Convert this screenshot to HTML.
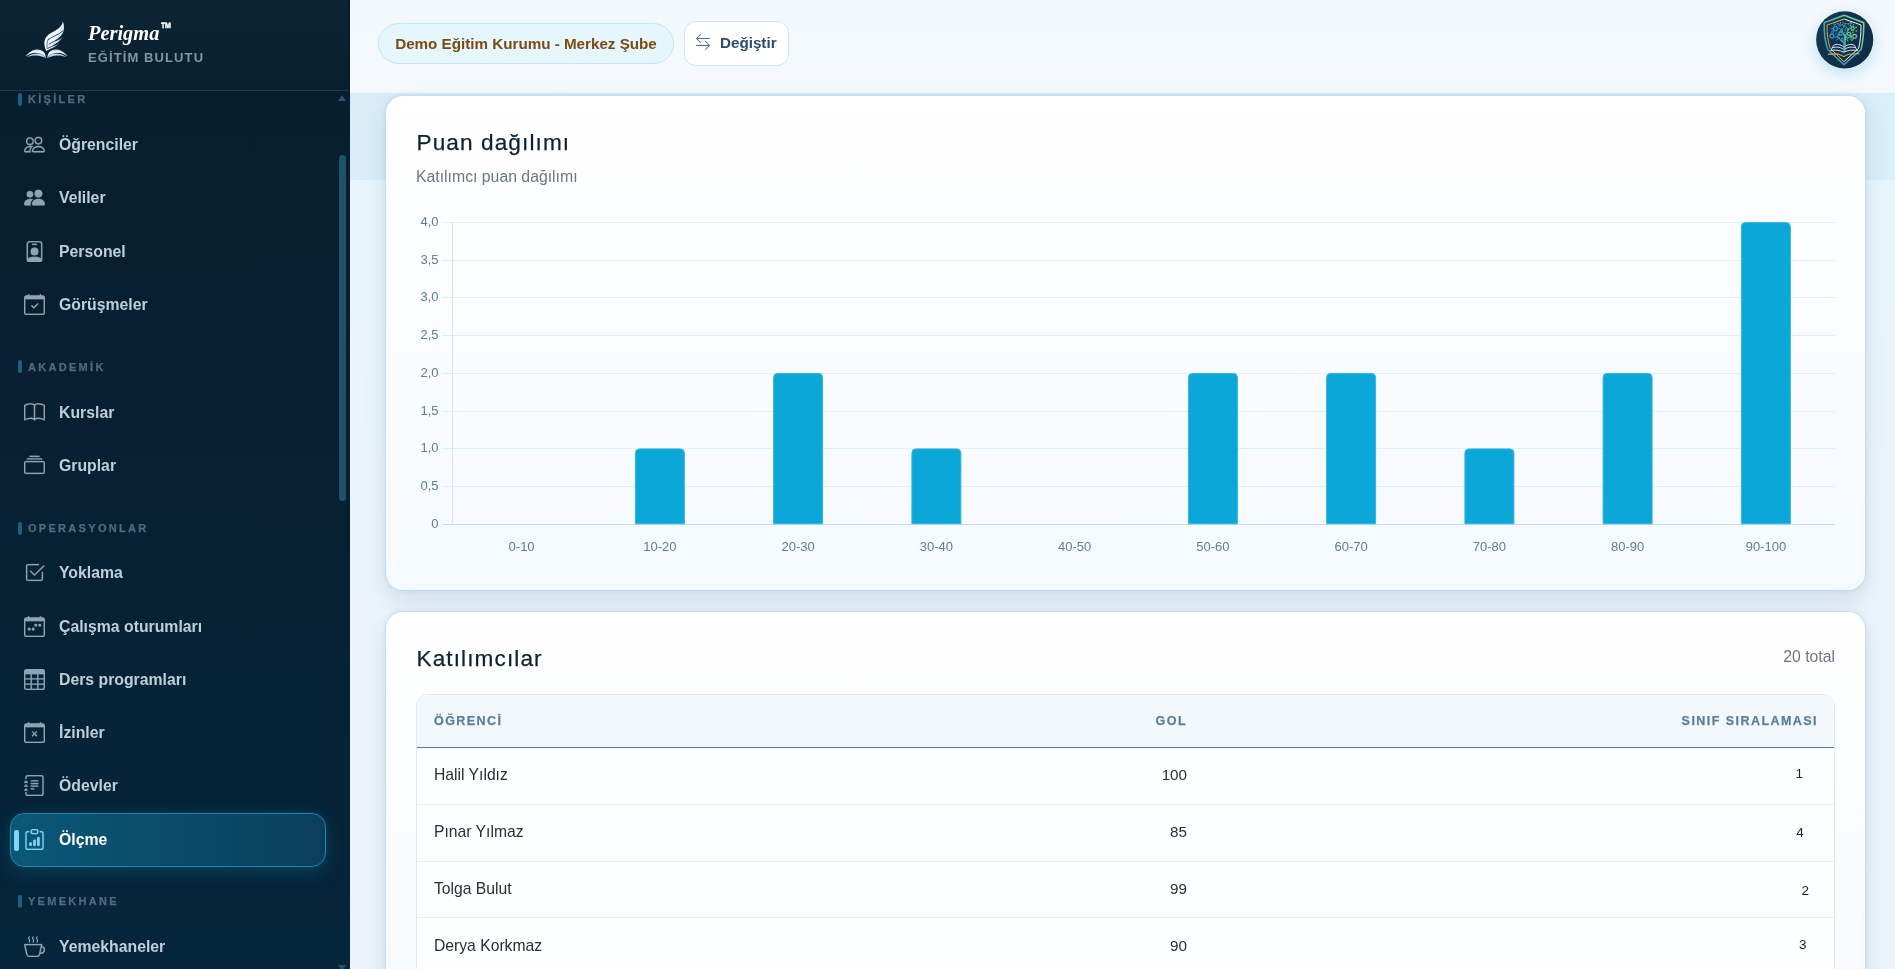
<!DOCTYPE html>
<html lang="tr">
<head>
<meta charset="utf-8">
<title>Perigma Eğitim Bulutu - Ölçme</title>
<style>
*{box-sizing:border-box;margin:0;padding:0}
html,body{width:1895px;height:969px;overflow:hidden}
body{font-family:"Liberation Sans",sans-serif;background:linear-gradient(180deg,#e8f5fc 180px,#ebf4fb 600px);color:#2b2f33;position:relative}
svg{display:block}
/* ---------- sidebar ---------- */
#sidebar{position:absolute;left:0;top:0;width:350px;height:969px;background:linear-gradient(180deg,#071e2e 0px,#071e2e 90px,#071f31 400px,#06263b 969px);overflow:hidden}
#brand{position:absolute;left:0;top:0;width:348px;height:91px;border-bottom:1px solid #1f3a4d;background:linear-gradient(180deg,#0c2534,#081f2f)}
#brand .name{position:absolute;left:88px;top:21.3px;font-family:"Liberation Serif",serif;font-weight:700;font-style:italic;font-size:20.4px;line-height:24px;color:#fff;white-space:nowrap}
#brand .tm{position:absolute;left:160.5px;top:18.7px;font-family:"Liberation Sans",sans-serif;font-weight:700;font-size:11.5px;line-height:12px;color:#fff;transform:scale(1,1.45);transform-origin:50% 0;-webkit-text-stroke:.35px #fff}
#brand .sub{position:absolute;left:88px;top:49px;font-weight:700;font-size:13px;line-height:18px;letter-spacing:1.1px;color:#7e98a9;white-space:nowrap}
#brand svg{position:absolute;left:24px;top:20px}
.sec{position:absolute;left:18.2px;height:14px;padding-left:9.8px;font-weight:700;font-size:11px;line-height:14px;letter-spacing:2.3px;-webkit-text-stroke:.25px #4d6b81;color:#4d6b81;white-space:nowrap}
.sec:before{content:"";position:absolute;left:0;top:0.8px;width:3.8px;height:13px;border-radius:2px;background:#1f5f80}
.nav{position:absolute;left:10px;width:316px;height:52px;border-radius:14px;color:#bfcfda;font-weight:700;font-size:15.8px;line-height:53px;white-space:nowrap}
.nav svg{position:absolute;left:14px;top:16px;width:21px;height:21px;fill:#8ea4b3;stroke:#8ea4b3;stroke-width:.15px}
.nav span{position:absolute;left:49px;top:0}
.nav.active{height:54px;background:linear-gradient(90deg,#0a5878 0%,#0a4a68 55%,#0a3f5c 100%);border:1px solid #2684aa;color:#fff;box-shadow:0 5px 18px rgba(18,120,160,.30),0 0 6px rgba(18,120,160,.18)}
.nav.active:before{content:"";position:absolute;left:3px;top:15.5px;width:4.6px;height:21px;border-radius:2px;background:#7fd6f7}
.nav.active svg{fill:#7fd6f7;stroke:#7fd6f7;left:13px;top:14.6px}
.nav.active span{left:48px;top:-1px}
#sbthumb{position:absolute;left:339px;top:155px;width:7px;height:346px;border-radius:3.5px;background:#1f5269}
.arr{position:absolute;left:338.3px;width:0;height:0;border-left:4.5px solid transparent;border-right:4.5px solid transparent}
/* ---------- top bar ---------- */
#topbar{position:absolute;left:350px;top:0;width:1545px;height:93px;background:linear-gradient(180deg,#f3f8fd,#f5f9fd)}
#pill{position:absolute;left:28px;top:23px;width:296px;height:41px;border-radius:21px;background:#e6f6fd;border:1px solid #c3e7f8;color:#7a4b12;font-weight:700;font-size:15.2px;line-height:39px;text-align:center;white-space:nowrap}
#swap{position:absolute;left:334px;top:21px;width:105px;height:45px;border-radius:12px;background:#fff;border:1px solid #cfe3f0}
#swap svg{position:absolute;left:9.5px;top:12px;width:16px;height:16px;fill:#4d6b81}
#swap span{position:absolute;left:35px;top:0;line-height:42px;font-weight:700;font-size:15.2px;color:#2c4d69}
#avatar{position:absolute;left:1466px;top:11px;width:58px;height:58px;border-radius:50%;box-shadow:0 4px 14px rgba(120,195,235,.45)}
/* ---------- content ---------- */
#band{position:absolute;left:350px;top:93px;width:1545px;height:87px;background:linear-gradient(90deg,#d9edf7,#d6ebf6 50%,#d9eff9)}
.card{position:absolute;left:386px;width:1479px;border-radius:17px;background:linear-gradient(180deg,#ffffff,#f5fafe);box-shadow:0 0 0 1px rgba(185,215,235,.5),0 0 6px rgba(110,160,195,.18),0 10px 24px rgba(95,135,165,.2)}
.h2{position:absolute;left:30.5px;font-size:22.6px;line-height:30px;color:#0c2233;white-space:nowrap;letter-spacing:1.1px;-webkit-text-stroke:.25px #0c2233}
.muted{position:absolute;color:#6b7785;font-size:15.8px;line-height:20px;white-space:nowrap}
#tbl{position:absolute;left:30px;top:82px;width:1419px;height:400px;border:1px solid #dbe9f3;border-radius:12px 12px 0 0;overflow:hidden;background:#fdfeff}
.thead{position:absolute;left:0;top:0;width:100%;height:53px;background:#f3f8fc;border-bottom:1.5px solid #5b7990;font-weight:700;font-size:12.5px;letter-spacing:1.45px;color:#5b7f99;line-height:52px;-webkit-text-stroke:.25px #5b7f99}
.tr{position:absolute;left:0;width:100%;height:57px;border-bottom:1px solid #e3eef6;font-size:15.7px;line-height:54px;color:#2b2f33}
#tbl span{position:absolute;white-space:nowrap}
#tbl .c1{left:17px}
#tbl .c2{right:647px}
#tbl .tr .c2{font-size:15.2px}
#tbl .c3{right:16px}
#tbl .rk{font-size:13.5px;line-height:20px;color:#1d2327}
#sidebar,#topbar,.card{will-change:transform}
</style>
</head>
<body>
<div id="band"></div>
<div id="topbar">
  <div id="pill">Demo Eğitim Kurumu - Merkez Şube</div>
  <div id="swap"><svg viewBox="0 0 16 16"><path fill-rule="evenodd" d="M1 11.5a.5.5 0 0 0 .5.5h11.793l-3.147 3.146a.5.5 0 0 0 .708.708l4-4a.5.5 0 0 0 0-.708l-4-4a.5.5 0 0 0-.708.708L13.293 11H1.500a.5.5 0 0 0-.5.5m14-7a.5.5 0 0 1-.5.5H2.707l3.147 3.146a.5.5 0 1 1-.708.708l-4-4a.5.5 0 0 1 0-.708l4-4a.5.5 0 1 1 .708.708L2.707 4H14.500a.5.5 0 0 1 .5.5"/></svg><span>Değiştir</span></div>
  <div id="avatar"><svg width="58" height="58" viewBox="0 0 58 58"><defs><linearGradient id="avb" x1="0" y1="0" x2="1" y2="1"><stop offset="0" stop-color="#143a54"/><stop offset="1" stop-color="#0c2a45"/></linearGradient><linearGradient id="avs" x1="0" y1="1" x2="1" y2="0"><stop offset="0" stop-color="#3a7fc4"/><stop offset=".5" stop-color="#4fb5ad"/><stop offset="1" stop-color="#93d98a"/></linearGradient><linearGradient id="avg" x1="0" y1="0" x2="1" y2="0"><stop offset="0" stop-color="#e0a326"/><stop offset=".5" stop-color="#f1c65a"/><stop offset=".56" stop-color="#ffffff"/><stop offset="1" stop-color="#f3efe6"/></linearGradient><linearGradient id="avt" x1="0" y1="0" x2="1" y2="0"><stop offset="0" stop-color="#3d8fd6"/><stop offset=".5" stop-color="#3fb0a8"/><stop offset="1" stop-color="#86d67f"/></linearGradient></defs>
<circle cx="28.700" cy="28.800" r="28.600" fill="url(#avb)"/>
<path d="M28.200 4.200L47.800 11.800C47.800 22 47 31 45 38.500L27.900 53.600L11.800 38.500C9 31 8 22 8.200 11.800Z" fill="none" stroke="url(#avs)" stroke-width="1.500" stroke-linejoin="round"/>
<path d="M28.200 8L45 14C45 23 44.300 31 42.600 37.400L27.900 50.700L14.300 37.400C11.800 31 10.900 23 11.100 14Z" fill="none" stroke="url(#avg)" stroke-width="1" stroke-linejoin="round"/>
<g fill="none" stroke="url(#avt)" stroke-width="1" stroke-linecap="round"><path d="M27.700 40.500C27.500 35 28 30 28.800 23.500" stroke="#3f93d2" stroke-width="1.200"/><path d="M28.900 40.500C28.700 35 29.200 30 29.800 23.500" stroke="#5cc79a" stroke-width="1.200"/><path d="M28.400 33C26 30 23.500 27.500 21 26"/><path d="M28.700 30C31 27.500 33.500 25.500 36 24.500"/><path d="M29 26C27.500 23 26.500 20.500 25.500 18"/><path d="M29.200 25C30.500 22 31.500 19.500 33 17"/></g>
<g><circle cx="19.3" cy="17.8" r="2.0" fill="none" stroke="#429fcc" stroke-width="1.1"/>
<line x1="21.60" y1="17.80" x2="22.40" y2="17.80" stroke="#429fcc" stroke-width=".8"/>
<line x1="20.45" y1="19.79" x2="20.85" y2="20.48" stroke="#429fcc" stroke-width=".8"/>
<line x1="18.15" y1="19.79" x2="17.75" y2="20.48" stroke="#429fcc" stroke-width=".8"/>
<line x1="17.00" y1="17.80" x2="16.20" y2="17.80" stroke="#429fcc" stroke-width=".8"/>
<line x1="18.15" y1="15.81" x2="17.75" y2="15.12" stroke="#429fcc" stroke-width=".8"/>
<line x1="20.45" y1="15.81" x2="20.85" y2="15.12" stroke="#429fcc" stroke-width=".8"/>
<circle cx="15.8" cy="25" r="1.9" fill="none" stroke="#3f94d3" stroke-width="1.1"/>
<line x1="18.00" y1="25.00" x2="18.80" y2="25.00" stroke="#3f94d3" stroke-width=".8"/>
<line x1="16.90" y1="26.91" x2="17.30" y2="27.60" stroke="#3f94d3" stroke-width=".8"/>
<line x1="14.70" y1="26.91" x2="14.30" y2="27.60" stroke="#3f94d3" stroke-width=".8"/>
<line x1="13.60" y1="25.00" x2="12.80" y2="25.00" stroke="#3f94d3" stroke-width=".8"/>
<line x1="14.70" y1="23.09" x2="14.30" y2="22.40" stroke="#3f94d3" stroke-width=".8"/>
<line x1="16.90" y1="23.09" x2="17.30" y2="22.40" stroke="#3f94d3" stroke-width=".8"/>
<circle cx="38.6" cy="25.3" r="1.9" fill="none" stroke="#79d289" stroke-width="1.1"/>
<line x1="40.80" y1="25.30" x2="41.60" y2="25.30" stroke="#79d289" stroke-width=".8"/>
<line x1="39.70" y1="27.21" x2="40.10" y2="27.90" stroke="#79d289" stroke-width=".8"/>
<line x1="37.50" y1="27.21" x2="37.10" y2="27.90" stroke="#79d289" stroke-width=".8"/>
<line x1="36.40" y1="25.30" x2="35.60" y2="25.30" stroke="#79d289" stroke-width=".8"/>
<line x1="37.50" y1="23.39" x2="37.10" y2="22.70" stroke="#79d289" stroke-width=".8"/>
<line x1="39.70" y1="23.39" x2="40.10" y2="22.70" stroke="#79d289" stroke-width=".8"/>
<circle cx="36.5" cy="17.5" r="1.6" fill="none" stroke="#70cf8f" stroke-width="1.1"/>
<line x1="38.40" y1="17.50" x2="39.20" y2="17.50" stroke="#70cf8f" stroke-width=".8"/>
<line x1="37.45" y1="19.15" x2="37.85" y2="19.84" stroke="#70cf8f" stroke-width=".8"/>
<line x1="35.55" y1="19.15" x2="35.15" y2="19.84" stroke="#70cf8f" stroke-width=".8"/>
<line x1="34.60" y1="17.50" x2="33.80" y2="17.50" stroke="#70cf8f" stroke-width=".8"/>
<line x1="35.55" y1="15.85" x2="35.15" y2="15.16" stroke="#70cf8f" stroke-width=".8"/>
<line x1="37.45" y1="15.85" x2="37.85" y2="15.16" stroke="#70cf8f" stroke-width=".8"/>
<circle cx="24.5" cy="22.5" r="1.6" fill="none" stroke="#48aec2" stroke-width="1.1"/>
<line x1="26.40" y1="22.50" x2="27.20" y2="22.50" stroke="#48aec2" stroke-width=".8"/>
<line x1="25.45" y1="24.15" x2="25.85" y2="24.84" stroke="#48aec2" stroke-width=".8"/>
<line x1="23.55" y1="24.15" x2="23.15" y2="24.84" stroke="#48aec2" stroke-width=".8"/>
<line x1="22.60" y1="22.50" x2="21.80" y2="22.50" stroke="#48aec2" stroke-width=".8"/>
<line x1="23.55" y1="20.85" x2="23.15" y2="20.16" stroke="#48aec2" stroke-width=".8"/>
<line x1="25.45" y1="20.85" x2="25.85" y2="20.16" stroke="#48aec2" stroke-width=".8"/>
<circle cx="33" cy="22.8" r="1.6" fill="none" stroke="#63cb9a" stroke-width="1.1"/>
<line x1="34.90" y1="22.80" x2="35.70" y2="22.80" stroke="#63cb9a" stroke-width=".8"/>
<line x1="33.95" y1="24.45" x2="34.35" y2="25.14" stroke="#63cb9a" stroke-width=".8"/>
<line x1="32.05" y1="24.45" x2="31.65" y2="25.14" stroke="#63cb9a" stroke-width=".8"/>
<line x1="31.10" y1="22.80" x2="30.30" y2="22.80" stroke="#63cb9a" stroke-width=".8"/>
<line x1="32.05" y1="21.15" x2="31.65" y2="20.46" stroke="#63cb9a" stroke-width=".8"/>
<line x1="33.95" y1="21.15" x2="34.35" y2="20.46" stroke="#63cb9a" stroke-width=".8"/>
<circle cx="23.6" cy="14.4" r=".95" fill="none" stroke="#47abc4" stroke-width=".8"/>
<rect x="31.4" y="12.3" width="1.700" height="1.200" fill="#60ca9c"/>
<line x1="29.7" y1="17.4" x2="28.8" y2="19.5" stroke="#54c0ab" stroke-width=".9"/>
<circle cx="16.5" cy="21.1" r=".95" fill="none" stroke="#4096d1" stroke-width=".8"/>
<rect x="25.4" y="26.6" width="1.700" height="1.200" fill="#4ab3bf"/>
<line x1="31.3" y1="28.5" x2="32.0" y2="30.6" stroke="#5dc99e" stroke-width=".9"/>
<circle cx="18.8" cy="13.7" r=".95" fill="none" stroke="#429dcd" stroke-width=".8"/>
<rect x="22.4" y="26.4" width="1.700" height="1.200" fill="#46aac5"/>
<line x1="20.6" y1="21.8" x2="19.0" y2="23.3" stroke="#43a0cb" stroke-width=".9"/>
<circle cx="31.9" cy="18.6" r=".95" fill="none" stroke="#5ec99d" stroke-width=".8"/>
<rect x="28.7" y="12.1" width="1.700" height="1.200" fill="#55c2a9"/>
<line x1="27.7" y1="16.4" x2="26.3" y2="18.0" stroke="#4cb6bb" stroke-width=".9"/>
<circle cx="28.9" cy="28.1" r=".95" fill="none" stroke="#53bfad" stroke-width=".8"/>
<rect x="26.8" y="23.5" width="1.700" height="1.200" fill="#4eb9b7"/>
<line x1="30.2" y1="15.5" x2="31.1" y2="17.5" stroke="#59c7a1" stroke-width=".9"/>
<circle cx="25.4" cy="19.1" r=".95" fill="none" stroke="#49b0c0" stroke-width=".8"/>
<rect x="18.6" y="25.6" width="1.700" height="1.200" fill="#439fcc"/>
<line x1="24.7" y1="11.0" x2="24.1" y2="13.1" stroke="#48aec2" stroke-width=".9"/>
<circle cx="21.9" cy="24.7" r=".95" fill="none" stroke="#45a6c7" stroke-width=".8"/>
<rect x="39.5" y="19.4" width="1.700" height="1.200" fill="#80d484"/>
<line x1="31.3" y1="26.2" x2="33.3" y2="27.2" stroke="#60ca9c" stroke-width=".9"/>
<circle cx="25.6" cy="29.5" r=".95" fill="none" stroke="#49b1c0" stroke-width=".8"/>
<rect x="33.4" y="14.1" width="1.700" height="1.200" fill="#67cc96"/>
<line x1="28.7" y1="20.6" x2="27.9" y2="22.6" stroke="#50bcb2" stroke-width=".9"/>
<circle cx="29.9" cy="25.9" r=".95" fill="none" stroke="#57c4a7" stroke-width=".8"/>
<rect x="39.2" y="15.8" width="1.700" height="1.200" fill="#7ed385"/>
<line x1="37.8" y1="13.1" x2="36.8" y2="15.1" stroke="#73d08d" stroke-width=".9"/>
<circle cx="35.8" cy="28.5" r=".95" fill="none" stroke="#6ece91" stroke-width=".8"/>
<rect x="14.7" y="17.2" width="1.700" height="1.200" fill="#3f93d3"/>
<line x1="22.5" y1="16.6" x2="24.1" y2="18.0" stroke="#47aac4" stroke-width=".9"/>
<circle cx="28.3" cy="14.9" r=".95" fill="none" stroke="#50bcb2" stroke-width=".8"/>
<rect x="35.9" y="20.6" width="1.700" height="1.200" fill="#71cf8f"/>
<line x1="21.7" y1="27.6" x2="20.6" y2="29.5" stroke="#44a4c8" stroke-width=".9"/>
<circle cx="34.8" cy="12.1" r=".95" fill="none" stroke="#6acd94" stroke-width=".8"/>
<rect x="20.8" y="12.1" width="1.700" height="1.200" fill="#45a5c8"/>
<line x1="26.3" y1="11.3" x2="28.3" y2="12.2" stroke="#4db7b9" stroke-width=".9"/>
<circle cx="34.8" cy="25.8" r=".95" fill="none" stroke="#6acd94" stroke-width=".8"/>
<rect x="25.2" y="13.2" width="1.700" height="1.200" fill="#49b2bf"/></g>
<g fill="none" stroke="#f4f6f8" stroke-width=".9" stroke-linecap="round" stroke-linejoin="round"><path d="M15.500 38.400L17.600 34.300C20.500 32.700 24.500 33.200 27.300 35.700"/><path d="M40.500 38.400L38.400 34.300C35.500 32.700 31.500 33.200 28.800 35.700"/><path d="M14.800 39.500C19 38.600 23.500 39 27.800 41.300C32 39 36.800 38.600 41.300 39.500"/><path d="M17.500 36.500C20.500 35.500 24 36 27 38"/><path d="M38.500 36.500C35.500 35.500 32 36 29 38"/></g>
<path d="M12.500 43.100L22 43C24 43.200 26 44.500 27.800 45.600C29.600 44.500 31.600 43.200 33.600 43L43.100 42.700" fill="none" stroke="#eab23a" stroke-width="1.100" stroke-linecap="round" stroke-linejoin="round"/>
</svg>
</div>
</div>
<div class="card" id="c1" style="top:96px;height:494px">
  <svg id="chart" width="1479" height="494" viewBox="0 0 1479 494" style="position:absolute;left:0;top:0" font-family="Liberation Sans, sans-serif" font-size="13" fill="#5f7d94"><line x1="56" y1="126.5" x2="1449" y2="126.5" stroke="#e3eff7" stroke-width="1"/>
<text x="52.5" y="129.8" text-anchor="end">4,0</text>
<line x1="56" y1="164.5" x2="1449" y2="164.5" stroke="#e3eff7" stroke-width="1"/>
<text x="52.5" y="167.8" text-anchor="end">3,5</text>
<line x1="56" y1="201.5" x2="1449" y2="201.5" stroke="#e3eff7" stroke-width="1"/>
<text x="52.5" y="204.8" text-anchor="end">3,0</text>
<line x1="56" y1="239.5" x2="1449" y2="239.5" stroke="#e3eff7" stroke-width="1"/>
<text x="52.5" y="242.8" text-anchor="end">2,5</text>
<line x1="56" y1="277.5" x2="1449" y2="277.5" stroke="#e3eff7" stroke-width="1"/>
<text x="52.5" y="280.8" text-anchor="end">2,0</text>
<line x1="56" y1="315.5" x2="1449" y2="315.5" stroke="#e3eff7" stroke-width="1"/>
<text x="52.5" y="318.8" text-anchor="end">1,5</text>
<line x1="56" y1="352.5" x2="1449" y2="352.5" stroke="#e3eff7" stroke-width="1"/>
<text x="52.5" y="355.8" text-anchor="end">1,0</text>
<line x1="56" y1="390.5" x2="1449" y2="390.5" stroke="#e3eff7" stroke-width="1"/>
<text x="52.5" y="393.8" text-anchor="end">0,5</text>
<line x1="56" y1="428.5" x2="1449" y2="428.5" stroke="#c9dbe7" stroke-width="1"/>
<text x="52.5" y="431.8" text-anchor="end">0</text>
<line x1="66.5" y1="126" x2="66.5" y2="428.29999999999995" stroke="#dfe3e7" stroke-width="1"/>
<text x="135.6" y="454.79999999999995" text-anchor="middle">0-10</text>
<text x="273.9" y="454.79999999999995" text-anchor="middle">10-20</text>
<path d="M249.4 427.79999999999995 V356.9 a4 4 0 0 1 4 -4 h41 a4 4 0 0 1 4 4 V427.79999999999995 z" fill="#0ba7d9" stroke="#33b7e1" stroke-width="1"/>
<text x="412.1" y="454.79999999999995" text-anchor="middle">20-30</text>
<path d="M387.6 427.79999999999995 V281.4 a4 4 0 0 1 4 -4 h41 a4 4 0 0 1 4 4 V427.79999999999995 z" fill="#0ba7d9" stroke="#33b7e1" stroke-width="1"/>
<text x="550.4" y="454.79999999999995" text-anchor="middle">30-40</text>
<path d="M525.9 427.79999999999995 V356.9 a4 4 0 0 1 4 -4 h41 a4 4 0 0 1 4 4 V427.79999999999995 z" fill="#0ba7d9" stroke="#33b7e1" stroke-width="1"/>
<text x="688.6" y="454.79999999999995" text-anchor="middle">40-50</text>
<text x="826.9" y="454.79999999999995" text-anchor="middle">50-60</text>
<path d="M802.4 427.79999999999995 V281.4 a4 4 0 0 1 4 -4 h41 a4 4 0 0 1 4 4 V427.79999999999995 z" fill="#0ba7d9" stroke="#33b7e1" stroke-width="1"/>
<text x="965.1" y="454.79999999999995" text-anchor="middle">60-70</text>
<path d="M940.6 427.79999999999995 V281.4 a4 4 0 0 1 4 -4 h41 a4 4 0 0 1 4 4 V427.79999999999995 z" fill="#0ba7d9" stroke="#33b7e1" stroke-width="1"/>
<text x="1103.4" y="454.79999999999995" text-anchor="middle">70-80</text>
<path d="M1078.9 427.79999999999995 V356.9 a4 4 0 0 1 4 -4 h41 a4 4 0 0 1 4 4 V427.79999999999995 z" fill="#0ba7d9" stroke="#33b7e1" stroke-width="1"/>
<text x="1241.6" y="454.79999999999995" text-anchor="middle">80-90</text>
<path d="M1217.1 427.79999999999995 V281.4 a4 4 0 0 1 4 -4 h41 a4 4 0 0 1 4 4 V427.79999999999995 z" fill="#0ba7d9" stroke="#33b7e1" stroke-width="1"/>
<text x="1379.9" y="454.79999999999995" text-anchor="middle">90-100</text>
<path d="M1355.4 427.79999999999995 V130.6 a4 4 0 0 1 4 -4 h41 a4 4 0 0 1 4 4 V427.79999999999995 z" fill="#0ba7d9" stroke="#33b7e1" stroke-width="1"/></svg>
  <div class="h2" style="top:32px">Puan dağılımı</div>
  <div class="muted" style="left:30px;top:71px">Katılımcı puan dağılımı</div>
</div>
<div class="card" id="c2" style="top:612px;height:420px">
  <div class="h2" style="top:32px">Katılımcılar</div>
  <div class="muted" style="right:30px;top:35px">20 total</div>
  <div id="tbl">
    <div class="thead"><span class="c1">ÖĞRENCİ</span><span class="c2">GOL</span><span class="c3">SINIF SIRALAMASI</span></div>
    <div class="tr" style="top:53px"><span class="c1">Halil Yıldız</span><span class="c2">100</span><span class="rk" style="right:31px;top:15.8px">1</span></div>
    <div class="tr" style="top:110px"><span class="c1">Pınar Yılmaz</span><span class="c2">85</span><span class="rk" style="right:30.3px;top:17.5px">4</span></div>
    <div class="tr" style="top:167px;height:56px"><span class="c1">Tolga Bulut</span><span class="c2">99</span><span class="rk" style="right:25px;top:18.8px">2</span></div>
    <div class="tr" style="top:223px;line-height:56px"><span class="c1">Derya Korkmaz</span><span class="c2">90</span><span class="rk" style="right:27.6px;top:16.7px">3</span></div>
  </div>
</div>

<div id="sidebar">
  <div id="brand"><svg width="46" height="42" viewBox="0 0 46 42"><defs><linearGradient id="lgw" x1="0" y1="0" x2="1" y2="1"><stop offset="0" stop-color="#ffffff"/><stop offset=".5" stop-color="#f2f8fd"/><stop offset="1" stop-color="#8ec4ee"/></linearGradient><linearGradient id="lgb" x1="0" y1="0" x2="0" y2="1"><stop offset="0" stop-color="#b9cfdf"/><stop offset=".4" stop-color="#ffffff"/><stop offset="1" stop-color="#d5e9f8"/></linearGradient></defs>
<path d="M38.900 1.600C38 6.500 33.500 10 27 13C22.300 15.500 20.100 19.500 20.400 24C20.600 27 21.400 29.200 22.300 31C25.500 28.800 30.800 27.800 35.400 23.200C32.500 24.800 30 25.400 28 25.800C32.500 23.700 36.600 21 38.400 17.300C35.600 19.400 32.500 20.500 30 21C34.500 18.500 38.600 15 39.600 10.500C40.200 8 40 4.500 38.900 1.600Z" fill="url(#lgw)"/>
<g fill="none" stroke="#0a2133" stroke-width=".8" stroke-linecap="round"><path d="M24.400 19.700C27.500 16.400 34 15.600 38.700 11"/><path d="M25 24.100C28 21.600 33 20.800 37.200 18.300"/><path d="M24 28.200C27 26.200 30.500 26 34 23.900"/><path d="M24.300 18.800C22.900 22 22.700 25.500 23.200 28.600" stroke-width=".6"/></g>
<g id="pg"><path d="M1.200 36.600C5 31.800 10 29.100 14 29.500C17.700 29.900 20.200 31.800 21.200 34.400L22 37.200C19 33.900 15 32.700 11.500 32.700C7.500 32.700 4 34.500 1.200 36.600Z" fill="url(#lgb)"/><path d="M2.600 37C7 34 11 33.200 14.500 33.500C18.200 33.900 20.700 35.800 22.600 38.600C19.500 36.700 16 35.700 12.500 35.500C9 35.300 6 35.900 2.600 37Z" fill="#b7dbf6"/></g>
<use href="#pg" transform="translate(45.200 0) scale(-1 1)"/>
</svg>

    <div class="name">Perigma</div><div class="tm">™</div>
    <div class="sub">EĞİTİM BULUTU</div>
  </div>
  <div class="sec" style="top:92.3px">KİŞİLER</div>
  <div class="sec" style="top:359.7px">AKADEMİK</div>
  <div class="sec" style="top:520.9px">OPERASYONLAR</div>
  <div class="sec" style="top:893.9px">YEMEKHANE</div>
  <div class="nav" style="top:118px"><svg viewBox="0 0 16 16"><path d="M15 14s1 0 1-1-1-4-5-4-5 3-5 4 1 1 1 1zm-7.978-1L7 12.996c.001-.264.167-1.03.76-1.72C8.312 10.629 9.282 10 11 10c1.717 0 2.687.63 3.24 1.276.593.69.758 1.457.76 1.72l-.008.002-.014.002zM11 7a2 2 0 1 0 0-4 2 2 0 0 0 0 4m3-2a3 3 0 1 1-6 0 3 3 0 0 1 6 0M6.936 9.28a6 6 0 0 0-1.23-.247A7 7 0 0 0 5 9c-4 0-5 3-5 4q0 1 1 1h4.216A2.24 2.24 0 0 1 5 13c0-1.01.377-2.042 1.09-2.904.243-.294.526-.569.846-.816M4.92 10A5.5 5.5 0 0 0 4 13H1c0-.26.164-1.03.76-1.724.545-.636 1.492-1.256 3.16-1.275ZM1.5 5.5a3 3 0 1 1 6 0 3 3 0 0 1-6 0m3-2a2 2 0 1 0 0 4 2 2 0 0 0 0-4"/></svg><span>Öğrenciler</span></div>
  <div class="nav" style="top:171px"><svg viewBox="0 0 16 16"><path d="M7 14s-1 0-1-1 1-4 5-4 5 3 5 4-1 1-1 1zm4-6a3 3 0 1 0 0-6 3 3 0 0 0 0 6m-5.784 6A2.24 2.24 0 0 1 5 13c0-1.355.68-2.75 1.936-3.72A6.3 6.3 0 0 0 5 9c-4 0-5 3-5 4s1 1 1 1zM4.5 8a2.5 2.5 0 1 0 0-5 2.5 2.5 0 0 0 0 5"/></svg><span>Veliler</span></div>
  <div class="nav" style="top:225px"><svg viewBox="0 0 16 16"><path d="M6.5 2a.5.5 0 0 0 0 1h3a.5.5 0 0 0 0-1zM11 8a3 3 0 1 1-6 0 3 3 0 0 1 6 0"/><path d="M4.5 0A2.5 2.5 0 0 0 2 2.5V14a2 2 0 0 0 2 2h8a2 2 0 0 0 2-2V2.5A2.5 2.5 0 0 0 11.5 0zM3 2.5A1.5 1.5 0 0 1 4.5 1h7A1.5 1.5 0 0 1 13 2.5v10.795a4.2 4.2 0 0 0-.776-.492C11.392 12.387 10.063 12 8 12s-3.392.387-4.224.803a4.2 4.2 0 0 0-.776.492z"/></svg><span>Personel</span></div>
  <div class="nav" style="top:278px"><svg viewBox="0 0 16 16"><path d="M10.854 7.146a.5.5 0 0 1 0 .708l-3 3a.5.5 0 0 1-.708 0l-1.500-1.500a.5.5 0 1 1 .708-.708L7.500 9.793l2.646-2.647a.5.5 0 0 1 .708 0"/><path d="M3.5 0a.5.5 0 0 1 .5.5V1h8V.5a.5.5 0 0 1 1 0V1h1a2 2 0 0 1 2 2v11a2 2 0 0 1-2 2H2a2 2 0 0 1-2-2V3a2 2 0 0 1 2-2h1V.5a.5.5 0 0 1 .5-.5M1 4v10a1 1 0 0 0 1 1h12a1 1 0 0 0 1-1V4z"/></svg><span>Görüşmeler</span></div>
  <div class="nav" style="top:386px"><svg viewBox="0 0 16 16"><path d="M1 2.828c.885-.37 2.154-.769 3.388-.893 1.330-.134 2.458.063 3.112.752v9.746c-.935-.530-2.120-.603-3.213-.493-1.180.120-2.370.461-3.287.811zm7.500-.141c.654-.689 1.782-.886 3.112-.752 1.234.124 2.503.523 3.388.893v9.923c-.918-.350-2.107-.692-3.287-.810-1.094-.111-2.278-.039-3.213.492zM8 1.783C7.015.936 5.587.810 4.287.940c-1.514.153-3.042.672-3.994 1.105A.5.5 0 0 0 0 2.500v11a.5.5 0 0 0 .707.455c.882-.400 2.303-.881 3.680-1.020 1.409-.142 2.590.087 3.223.877a.5.5 0 0 0 .780 0c.633-.790 1.814-1.019 3.222-.877 1.378.139 2.800.620 3.681 1.020A.5.5 0 0 0 16 13.500v-11a.5.5 0 0 0-.293-.455c-.952-.433-2.480-.952-3.994-1.105C10.413.809 8.985.936 8 1.783"/></svg><span>Kurslar</span></div>
  <div class="nav" style="top:439px"><svg viewBox="0 0 16 16"><path d="M2.500 3.500a.5.5 0 0 1 0-1h11a.5.5 0 0 1 0 1zm2-2a.5.5 0 0 1 0-1h7a.5.5 0 0 1 0 1zM0 13a1.500 1.500 0 0 0 1.500 1.500h13A1.500 1.500 0 0 0 16 13V6a1.500 1.500 0 0 0-1.500-1.500h-13A1.500 1.500 0 0 0 0 6zm1.500.5A.5.5 0 0 1 1 13V6a.5.5 0 0 1 .5-.5h13a.5.5 0 0 1 .5.5v7a.5.5 0 0 1-.5.5z"/></svg><span>Gruplar</span></div>
  <div class="nav" style="top:546px"><svg viewBox="0 0 16 16"><path d="M3 14.500A1.500 1.500 0 0 1 1.500 13V3A1.500 1.500 0 0 1 3 1.500h8a.5.5 0 0 1 0 1H3a.5.5 0 0 0-.5.5v10a.5.5 0 0 0 .5.5h10a.5.5 0 0 0 .5-.5V8a.5.5 0 0 1 1 0v5a1.500 1.500 0 0 1-1.500 1.500z"/><path d="m8.354 10.354 7-7a.5.5 0 0 0-.708-.708L8 9.293 5.354 6.646a.5.5 0 1 0-.708.708l3 3a.5.5 0 0 0 .708 0"/></svg><span>Yoklama</span></div>
  <div class="nav" style="top:600px"><svg viewBox="0 0 16 16"><path d="M11 6.500a.5.5 0 0 1 .5-.5h1a.5.5 0 0 1 .5.5v1a.5.5 0 0 1-.5.5h-1a.5.5 0 0 1-.5-.5zm-3 0a.5.5 0 0 1 .5-.5h1a.5.5 0 0 1 .5.5v1a.5.5 0 0 1-.5.5h-1a.5.5 0 0 1-.5-.5zm-5 3a.5.5 0 0 1 .5-.5h1a.5.5 0 0 1 .5.5v1a.5.5 0 0 1-.5.5h-1a.5.5 0 0 1-.5-.5zm3 0a.5.5 0 0 1 .5-.5h1a.5.5 0 0 1 .5.5v1a.5.5 0 0 1-.5.5h-1a.5.5 0 0 1-.5-.5z"/><path d="M3.5 0a.5.5 0 0 1 .5.5V1h8V.5a.5.5 0 0 1 1 0V1h1a2 2 0 0 1 2 2v11a2 2 0 0 1-2 2H2a2 2 0 0 1-2-2V3a2 2 0 0 1 2-2h1V.5a.5.5 0 0 1 .5-.5M1 4v10a1 1 0 0 0 1 1h12a1 1 0 0 0 1-1V4z"/></svg><span>Çalışma oturumları</span></div>
  <div class="nav" style="top:653px"><svg viewBox="0 0 16 16"><path d="M0 2a2 2 0 0 1 2-2h12a2 2 0 0 1 2 2v12a2 2 0 0 1-2 2H2a2 2 0 0 1-2-2zm15 2h-4v3h4zm0 4h-4v3h4zm0 4h-4v3h3a1 1 0 0 0 1-1zm-5 3v-3H6v3zm-5 0v-3H1v2a1 1 0 0 0 1 1zm-4-4h4V8H1zm0-4h4V4H1zm5-3v3h4V4zm4 4H6v3h4z"/></svg><span>Ders programları</span></div>
  <div class="nav" style="top:706px"><svg viewBox="0 0 16 16"><path d="M6.146 7.146a.5.5 0 0 1 .708 0L8 8.293l1.146-1.147a.5.5 0 1 1 .708.708L8.707 9l1.147 1.146a.5.5 0 0 1-.708.708L8 9.707l-1.146 1.147a.5.5 0 0 1-.708-.708L7.293 9 6.146 7.854a.5.5 0 0 1 0-.708"/><path d="M3.5 0a.5.5 0 0 1 .5.5V1h8V.5a.5.5 0 0 1 1 0V1h1a2 2 0 0 1 2 2v11a2 2 0 0 1-2 2H2a2 2 0 0 1-2-2V3a2 2 0 0 1 2-2h1V.5a.5.5 0 0 1 .5-.5M1 4v10a1 1 0 0 0 1 1h12a1 1 0 0 0 1-1V4z"/></svg><span>İzinler</span></div>
  <div class="nav" style="top:759px"><svg viewBox="0 0 16 16"><path d="M5 10.500a.5.5 0 0 1 .5-.5h2a.5.5 0 0 1 0 1h-2a.5.5 0 0 1-.5-.5m0-2a.5.5 0 0 1 .5-.5h5a.5.5 0 0 1 0 1h-5a.5.5 0 0 1-.5-.5m0-2a.5.5 0 0 1 .5-.5h5a.5.5 0 0 1 0 1h-5a.5.5 0 0 1-.5-.5m0-2a.5.5 0 0 1 .5-.5h5a.5.5 0 0 1 0 1h-5a.5.5 0 0 1-.5-.5"/><path d="M3 0h10a2 2 0 0 1 2 2v12a2 2 0 0 1-2 2H3a2 2 0 0 1-2-2v-1h1v1a1 1 0 0 0 1 1h10a1 1 0 0 0 1-1V2a1 1 0 0 0-1-1H3a1 1 0 0 0-1 1v1H1V2a2 2 0 0 1 2-2"/><path d="M1 5v-.5a.5.5 0 0 1 1 0V5h.5a.5.5 0 0 1 0 1h-2a.5.5 0 0 1 0-1zm0 3v-.5a.5.5 0 0 1 1 0V8h.5a.5.5 0 0 1 0 1h-2a.5.5 0 0 1 0-1zm0 3v-.5a.5.5 0 0 1 1 0v.5h.5a.5.5 0 0 1 0 1h-2a.5.5 0 0 1 0-1z"/></svg><span>Ödevler</span></div>
  <div class="nav active" style="top:813px"><svg viewBox="0 0 16 16"><path d="M4 11a1 1 0 1 1 2 0v1a1 1 0 1 1-2 0zm6-4a1 1 0 1 1 2 0v5a1 1 0 1 1-2 0zM7 9a1 1 0 0 1 2 0v3a1 1 0 1 1-2 0z"/><path d="M4 1.500H3a2 2 0 0 0-2 2V14a2 2 0 0 0 2 2h10a2 2 0 0 0 2-2V3.500a2 2 0 0 0-2-2h-1v1h1a1 1 0 0 1 1 1V14a1 1 0 0 1-1 1H3a1 1 0 0 1-1-1V3.500a1 1 0 0 1 1-1h1z"/><path d="M9.500 1a.5.5 0 0 1 .5.5v1a.5.5 0 0 1-.5.5h-3a.5.5 0 0 1-.5-.5v-1a.5.5 0 0 1 .5-.5zm-3-1A1.500 1.500 0 0 0 5 1.500v1A1.500 1.500 0 0 0 6.500 4h3A1.500 1.500 0 0 0 11 2.500v-1A1.500 1.500 0 0 0 9.500 0z"/></svg><span>Ölçme</span></div>
  <div class="nav" style="top:920px"><svg viewBox="0 0 16 16"><path fill-rule="evenodd" d="M.5 6a.5.5 0 0 0-.488.608l1.652 7.434A2.500 2.500 0 0 0 4.104 16h5.792a2.500 2.500 0 0 0 2.440-1.958l.131-.590a3 3 0 0 0 1.300-5.854l.221-.990A.5.5 0 0 0 13.500 6zM13 12.500a2 2 0 0 1-.316-.025l.867-3.898A2.001 2.001 0 0 1 13 12.500M2.640 13.825 1.123 7h11.754l-1.517 6.825A1.500 1.500 0 0 1 9.896 15H4.104a1.500 1.500 0 0 1-1.464-1.175"/><path fill="none" stroke="#8ea4b3" stroke-width=".9" stroke-linecap="round" d="M4 .6c-.9 1.100-.5 1.500 0 2.100s.6 1-.1 1.900M7 .6c-.9 1.100-.5 1.500 0 2.100s.6 1-.1 1.900M10 .6c-.9 1.100-.5 1.500 0 2.100s.6 1-.1 1.900"/></svg><span>Yemekhaneler</span></div>
  <div id="sbthumb"></div>
  <div class="arr" style="top:94.7px;border-bottom:6px solid #1f5571"></div>
  <div class="arr" style="top:965px;border-top:6px solid #1f5571"></div>
</div>
</body>
</html>
